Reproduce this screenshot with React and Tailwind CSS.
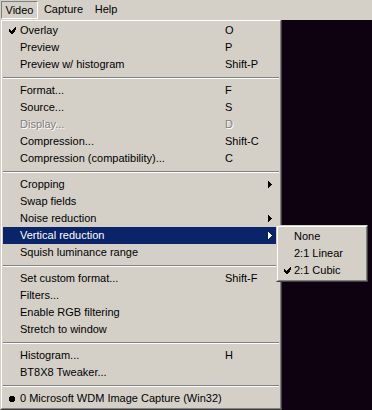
import React from 'react';

const FONT = { fontFamily: '"Liberation Sans", Arial, sans-serif' };

// menu items: type sep | item
const ITEMS = [
  { label: 'Overlay', key: 'O', check: true },
  { label: 'Preview', key: 'P' },
  { label: 'Preview w/ histogram', key: 'Shift-P' },
  { sep: true },
  { label: 'Format...', key: 'F' },
  { label: 'Source...', key: 'S' },
  { label: 'Display...', key: 'D', disabled: true },
  { label: 'Compression...', key: 'Shift-C' },
  { label: 'Compression (compatibility)...', key: 'C' },
  { sep: true },
  { label: 'Cropping', sub: true },
  { label: 'Swap fields' },
  { label: 'Noise reduction', sub: true },
  { label: 'Vertical reduction', sub: true, active: true },
  { label: 'Squish luminance range' },
  { sep: true },
  { label: 'Set custom format...', key: 'Shift-F' },
  { label: 'Filters...' },
  { label: 'Enable RGB filtering' },
  { label: 'Stretch to window' },
  { sep: true },
  { label: 'Histogram...', key: 'H' },
  { label: 'BT8X8 Tweaker...' },
  { sep: true },
  { label: '0 Microsoft WDM Image Capture (Win32)', radio: true },
];

const SUB = [
  { label: 'None' },
  { label: '2:1 Linear' },
  { label: '2:1 Cubic', check: true },
];

function Check() {
  // classic 7x7 menu check bitmap
  return (
    <svg width="7" height="7" viewBox="0 0 7 7" shapeRendering="crispEdges">
      <path d="M6 0h1v3h-1zM5 1h1v4h-1zM4 2h1v4h-1zM3 3h1v4h-1zM2 4h1v3h-1zM1 3h1v3h-1zM0 2h1v3h-1z" fill="currentColor" />
    </svg>
  );
}

function Bullet() {
  return (
    <svg width="6" height="6" viewBox="0 0 6 6" shapeRendering="crispEdges">
      <path d="M1 0h4v1h1v4h-1v1h-4v-1h-1v-4h1z" fill="currentColor" />
    </svg>
  );
}

function Arrow() {
  return (
    <svg width="4" height="7" viewBox="0 0 4 7" shapeRendering="crispEdges">
      <path d="M0 0h1v7h-1zM1 1h1v5h-1zM2 2h1v3h-1zM3 3h1v1h-1z" fill="currentColor" />
    </svg>
  );
}

function MenuRow({ item }) {
  if (item.sep) {
    return (
      <div className="h-[9px] pt-[4px]">
        <div className="h-px bg-[#808080]" />
        <div className="h-px bg-white" />
      </div>
    );
  }
  const text = item.active ? 'text-white' : item.disabled ? 'text-[#808080]' : 'text-black';
  const shadow = item.disabled ? { textShadow: '1px 1px 0 #ffffff' } : {};
  return (
    <div className={`relative h-[17px] flex items-center ${item.active ? 'bg-[#0a246a]' : ''} ${text}`}>
      <div className="w-[17px] flex items-center justify-center pl-[1px]">
        {item.check && <Check />}
        {item.radio && <Bullet />}
      </div>
      <span className="whitespace-nowrap leading-none" style={shadow}>{item.label}</span>
      {item.key && (
        <span className="absolute left-[222px] whitespace-nowrap leading-none" style={shadow}>{item.key}</span>
      )}
      {item.sub && (
        <span className="absolute left-[265px] top-[5px] flex">
          <Arrow />
        </span>
      )}
    </div>
  );
}

export default function App() {
  return (
    <div className="w-[372px] h-[410px] bg-[#d4d0c8] text-[11px] text-black flex flex-col relative overflow-hidden" style={FONT}>
      {/* menu bar */}
      <div className="h-[20px] flex items-start">
        <div className="ml-[1px] mt-[1px] w-[37px] h-[18px] border-t border-l border-[#808080] border-r-white border-b-white border-r border-b flex items-center justify-center">
          Video
        </div>
        <div className="w-[51px] h-[19px] flex items-center justify-center">Capture</div>
        <div className="w-[34px] h-[19px] flex items-center justify-center">Help</div>
      </div>

      <div className="flex flex-1">
        {/* dropdown */}
        <div className="w-[282px] h-[390px] border-l border-l-[#d4d0c8] border-r border-r-[#404040] border-b border-b-[#404040]">
          <div className="h-full border-t border-l border-white border-r border-r-[#808080] border-b border-b-[#808080] p-px">
            {ITEMS.map((it, i) => (
              <MenuRow key={i} item={it} />
            ))}
          </div>
        </div>
        <div className="flex-1 bg-[#0e0210]" />
      </div>

      {/* submenu */}
      <div className="absolute left-[276px] top-[225px] w-[92px] h-[57px] bg-[#d4d0c8] border-t border-l border-[#d4d0c8] border-r border-r-[#404040] border-b border-b-[#404040]">
        <div className="h-full border-t border-l border-white border-r border-r-[#808080] border-b border-b-[#808080] p-px">
          {SUB.map((s, i) => (
            <div key={i} className="h-[17px] flex items-center">
              <div className="w-[15px] flex items-center justify-center pl-[2px]">
                {s.check && <Check />}
              </div>
              <span className="whitespace-nowrap leading-none">{s.label}</span>
            </div>
          ))}
        </div>
      </div>
    </div>
  );
}
